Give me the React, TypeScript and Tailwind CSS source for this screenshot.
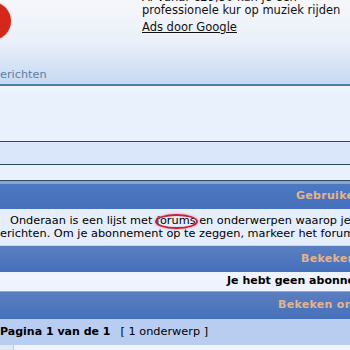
export default function App() {
  return (
    <div className="relative flex h-[350px] w-[350px] flex-col overflow-hidden bg-[#e9f1fd] font-['Verdana','DejaVu_Sans',sans-serif] text-[11.3px] text-black">
      {/* header with logo and ad */}
      <header className="relative h-[84px] shrink-0 bg-gradient-to-b from-[#f6f7fb] via-[#eaf0f9] to-[#c6d8f3]">
        <div className="absolute -left-[27px] top-[2px] h-[38px] w-[38px] rounded-full bg-[#d4281a] shadow-[0_0_2px_#f0a0a0]" />
        <div className="ml-[142px] -mt-[9px] flex flex-col text-[11.5px] leading-[13px] text-[#111]">
          <span className="whitespace-nowrap">Af vanaf €29,50 kun je een</span>
          <span className="whitespace-nowrap">professionele kur op muziek rijden</span>
          <a className="mt-[4px] whitespace-nowrap underline" href="#">
            Ads door Google
          </a>
        </div>
        <div className="absolute bottom-0 left-0 whitespace-nowrap text-[#5d7fa3]">
          erichten
        </div>
      </header>
      <div className="h-[2px] shrink-0 bg-[#4b7fa8]" />
      <div className="h-[55px] shrink-0 bg-gradient-to-b from-[#f2f6fd] to-[#e9f1fd] to-[15%]" />
      <div className="h-px shrink-0 bg-[#2d4b5a]" />
      <div className="h-[22px] shrink-0 bg-[#dae6fa]" />
      <div className="h-px shrink-0 bg-[#2d4b5a]" />
      <div className="h-[15px] shrink-0 bg-[#e9f1fd]" />
      <div className="h-px shrink-0 bg-[#2d4b5a]" />
      <div className="h-[3px] shrink-0 bg-[#8aa6c6]" />

      {/* Gebruikers bar */}
      <div className="flex h-[25px] shrink-0 items-center bg-gradient-to-b from-[#4e78c0] to-[#4570bb] pl-[296px] text-[11px] font-bold tracking-[0.3px] whitespace-nowrap text-[#e4b48c]">
        Gebruikerspaneel
      </div>
      <div className="relative flex h-[36px] shrink-0 flex-col justify-center bg-[#e6eefb] leading-[13px] whitespace-nowrap">
        <span className="pl-[10px]">Onderaan is een lijst met forums en onderwerpen waarop je</span>
        <span>erichten. Om je abonnement op te zeggen, markeer het forum</span>
        <div className="absolute left-[155px] top-[5px] h-[15px] w-[43px] rounded-[50%] border-2 border-[#c8203a] shadow-[0_0_3px_#f08aa0]" />
      </div>
      <div className="h-px shrink-0 bg-[#c6d6ef]" />

      {/* Bekeken forums */}
      <div className="flex h-[26px] shrink-0 items-center bg-gradient-to-b from-[#5a7fbf] to-[#4570bb] pl-[301px] text-[11px] font-bold tracking-[0.3px] whitespace-nowrap text-[#e4b48c]">
        Bekeken forums
      </div>
      <div className="flex h-[19px] shrink-0 items-center bg-[#eef3fd] pl-[227px] text-[11px] font-bold whitespace-nowrap">
        Je hebt geen abonnementen
      </div>
      <div className="h-px shrink-0 bg-[#8fa8c8]" />

      {/* Bekeken onderwerpen */}
      <div className="flex h-[27px] shrink-0 items-center bg-gradient-to-b from-[#5a7fbf] to-[#4570bb] pl-[278px] text-[11px] font-bold tracking-[0.3px] whitespace-nowrap text-[#e4b48c]">
        Bekeken onderwerpen
      </div>
      <div className="flex h-[26px] shrink-0 items-center gap-[10px] bg-[#b9cdf1] whitespace-nowrap">
        <span className="text-[11px] font-bold">Pagina 1 van de 1</span>
        <span>[ 1 onderwerp ]</span>
      </div>
      <div className="flex flex-1">
        <div className="w-[14px] border-r border-[#bccbe2] bg-[#e2eaf6]" />
        <div className="flex-1 bg-[#f0f4fc]" />
      </div>
    </div>
  );
}
